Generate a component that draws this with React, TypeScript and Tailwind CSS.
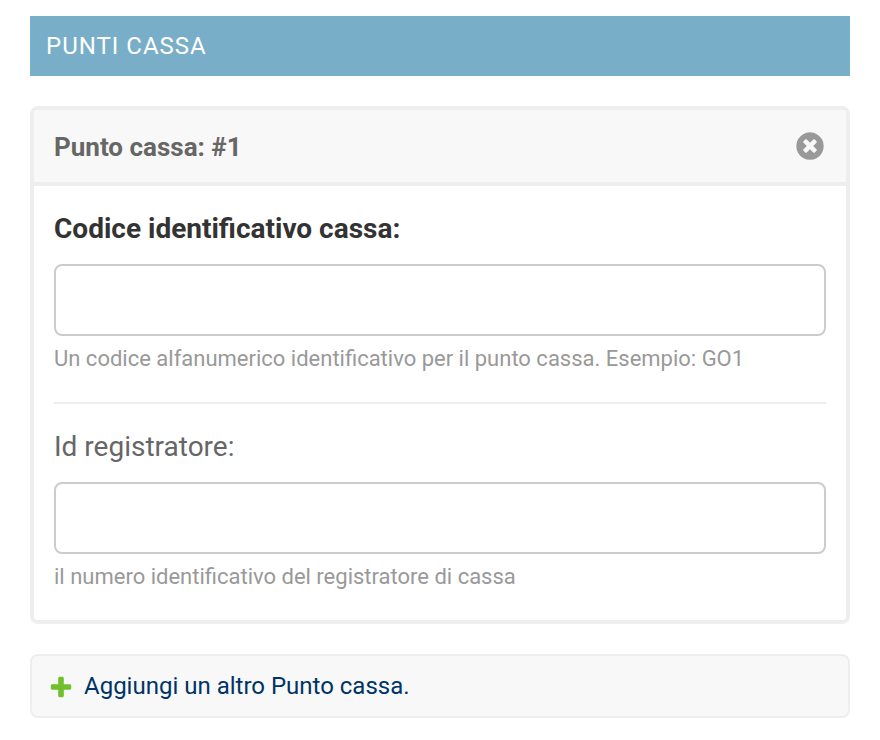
const Field = ({ label, help, required }: { label: string; help: string; required?: boolean }) => (
  <div>
    <label className={"block h-[38px] text-[28px] leading-[38px] " + (required ? "font-bold text-[#333]" : "text-[#666]")}>{label}</label>
    <input className="mt-[16px] block h-[72px] w-full rounded-[8px] border-2 border-[#ccc] bg-white px-4 outline-none" />
    <p className="mt-[10px] h-[26px] text-[22px] leading-[26px] text-[#999]">{help}</p>
  </div>
);

export default function App() {
  return (
    <main className="h-[740px] w-[880px] overflow-hidden bg-white px-[30px] pt-4 font-['Roboto',sans-serif]">
      <h2 className="flex h-[60px] items-center bg-[#79aec8] px-4 text-[24px] tracking-[1px] text-white">PUNTI CASSA</h2>
      <section className="mt-[30px] h-[518px] overflow-hidden rounded-[8px] border-4 border-[#eee]">
        <h3 className="flex h-[76px] items-center justify-between border-b-4 border-[#eee] bg-[#f8f8f8] pr-5 pl-5 text-[26px] font-bold text-[#666]">
          <span className="pt-0.5">Punto cassa: #1</span>
          <svg className="size-8" viewBox="0 0 1792 1792" fill="#999">
            <path d="M1277 1122q0-26-19-45l-181-181 181-181q19-19 19-45 0-27-19-46l-90-90q-19-19-46-19-26 0-45 19l-181 181-181-181q-19-19-45-19-27 0-46 19l-90 90q-19 19-19 46 0 26 19 45l181 181-181 181q-19 19-19 45 0 27 19 46l90 90q19 19 46 19 26 0 45-19l181-181 181 181q19 19 45 19 27 0 46-19l90-90q19-19 19-46zm387-226q0 209-103 385.5t-279.5 279.5-385.5 103-385.5-103-279.5-279.5-103-385.5 103-385.5 279.5-279.5 385.5-103 385.5 103 279.5 279.5 103 385.5z" />
          </svg>
        </h3>
        <div className="px-5 pt-6">
          <Field label="Codice identificativo cassa:" help="Un codice alfanumerico identificativo per il punto cassa. Esempio: GO1" required />
          <div className="mt-[30px] border-t-2 border-[#eee] pt-6">
            <Field label="Id registratore:" help="il numero identificativo del registratore di cassa" />
          </div>
        </div>
      </section>
      <div className="mt-[30px] flex h-16 items-center rounded-[8px] border-2 border-[#eee] bg-[#f8f8f8] pl-4">
        <svg className="mt-0.5 size-[26px]" viewBox="0 0 1792 1792" fill="#70bf2b">
          <path d="M1600 796v192q0 40-28 68t-68 28h-416v416q0 40-28 68t-68 28h-192q-40 0-68-28t-28-68v-416h-416q-40 0-68-28t-28-68v-192q0-40 28-68t68-28h416v-416q0-40 28-68t68-28h192q40 0 68 28t28 68v416h416q40 0 68 28t28 68z" />
        </svg>
        <a className="ml-2.5 text-[24px] text-[#036]">Aggiungi un altro Punto cassa.</a>
      </div>
    </main>
  );
}
